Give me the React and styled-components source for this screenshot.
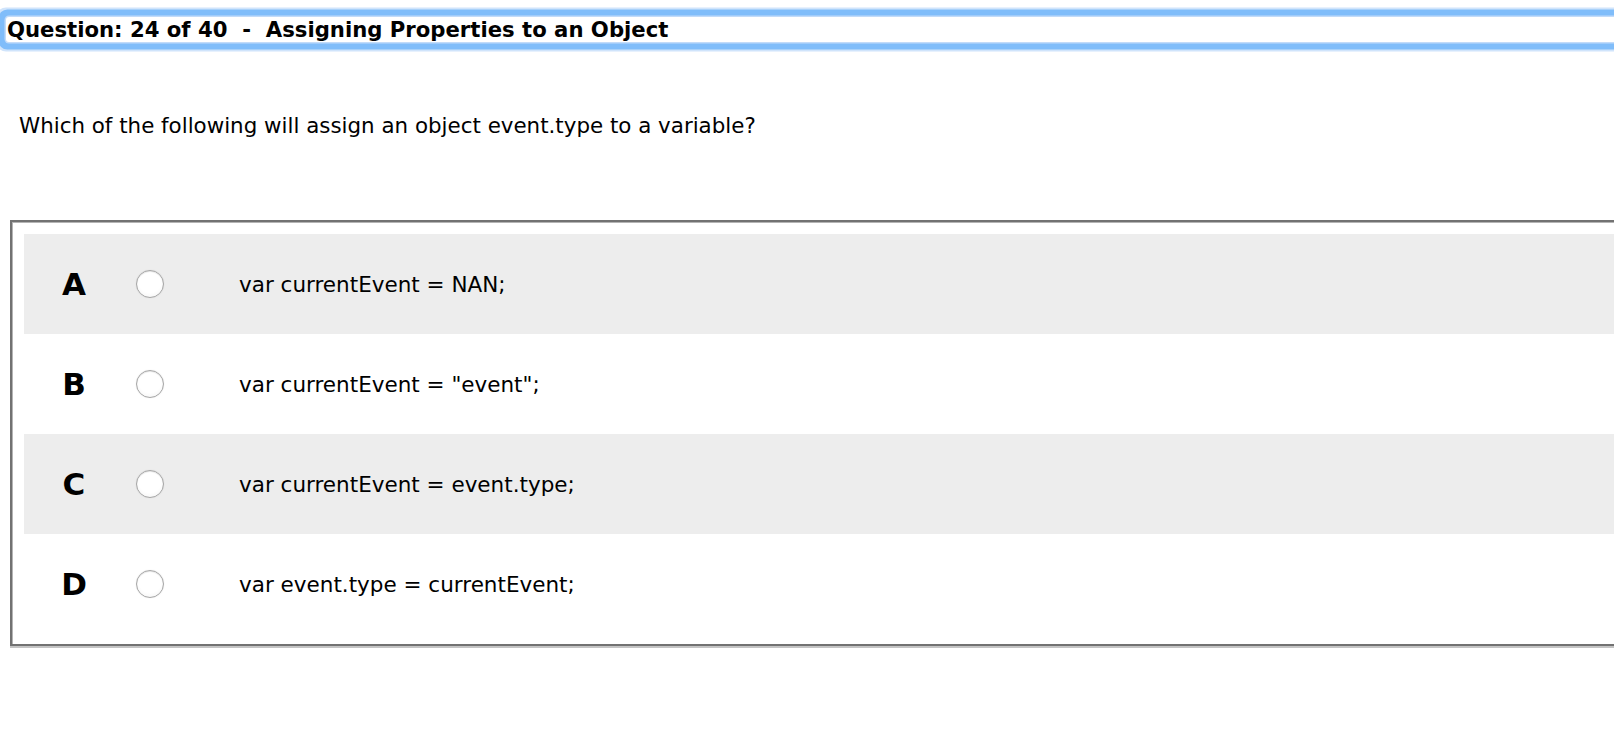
import React from "react";
import styled, { createGlobalStyle } from "styled-components";

const Global = createGlobalStyle`
  html, body {
    margin: 0;
    padding: 0;
    background: #ffffff;
    overflow: hidden;
  }
  body {
    font-family: "DejaVu Sans", Verdana, sans-serif;
    color: #000;
  }
`;

const Page = styled.div`
  width: 1614px;
  height: 730px;
  overflow: hidden;
  padding-top: 17px;
  box-sizing: border-box;
`;

const TitleBar = styled.div`
  margin: 0 -40px 0 6px;
  height: 25px;
  display: flex;
  align-items: center;
  padding-left: 1px;
  background: #fff;
  border-radius: 3px;
  box-shadow: 0 0 0 1.5px #c2dbf9, 0 0 0 7.5px #80bdfa, 0 0 0 9.5px #d0e4fb;
  font-weight: bold;
  font-size: 21.2px;
  white-space: nowrap;
`;

const Prompt = styled.p`
  margin: 71px 0 0 19px;
  font-size: 21.4px;
  line-height: 26px;
  white-space: nowrap;
`;

const Choices = styled.div`
  margin: 81px -60px 0 10px;
  border: 2px solid #727272;
  padding: 12px 12px 10px 12px;
  box-shadow: inset 1px 1px 0 #b4b4b4, 0 2px 0 #c4c4c4;
`;

const Row = styled.label`
  display: flex;
  align-items: center;
  height: 100px;
  background: ${(p) => (p.$shaded ? "#ededed" : "#ffffff")};
`;

const Letter = styled.span`
  width: 100px;
  text-align: center;
  font-weight: bold;
  font-size: 31px;
  line-height: 1;
`;

const Radio = styled.span`
  width: 26px;
  height: 26px;
  margin-left: 12px;
  border-radius: 50%;
  border: 1px solid #a6a6a6;
  background: radial-gradient(circle at 50% 40%, #ffffff 55%, #f0f0f0 100%);
  box-shadow: inset 0 1px 1px rgba(0, 0, 0, 0.1), 0 0 1px rgba(0, 0, 0, 0.15);
  flex: none;
`;

const ChoiceText = styled.span`
  margin-left: 75px;
  font-size: 21.5px;
  white-space: nowrap;
`;

const choices = [
  { letter: "A", text: "var currentEvent = NAN;" },
  { letter: "B", text: 'var currentEvent = "event";' },
  { letter: "C", text: "var currentEvent = event.type;" },
  { letter: "D", text: "var event.type = currentEvent;" },
];

export default function App() {
  return (
    <Page>
      <Global />
      <TitleBar>Question: 24 of 40{"\u00a0\u00a0-\u00a0\u00a0"}Assigning Properties to an Object</TitleBar>
      <Prompt>Which of the following will assign an object event.type to a variable?</Prompt>
      <Choices>
        {choices.map((c, i) => (
          <Row key={c.letter} $shaded={i % 2 === 0}>
            <Letter>{c.letter}</Letter>
            <Radio />
            <ChoiceText>{c.text}</ChoiceText>
          </Row>
        ))}
      </Choices>
    </Page>
  );
}
